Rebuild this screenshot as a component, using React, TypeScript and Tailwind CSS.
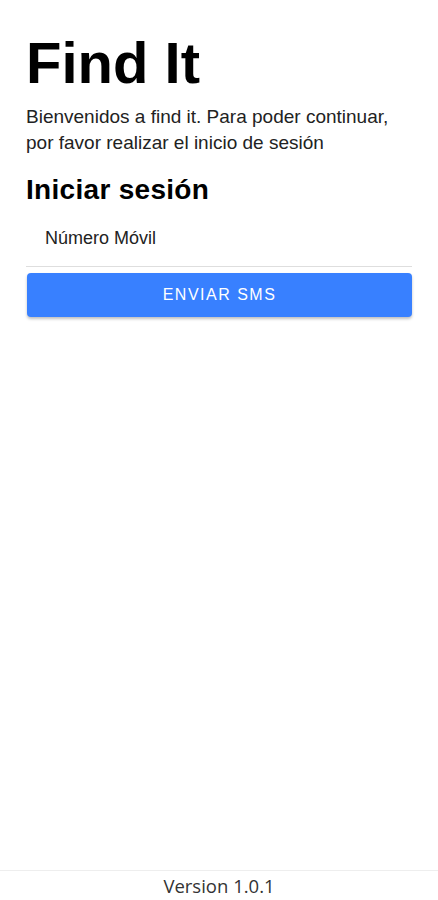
import React from 'react';

const App: React.FC = () => {
  return (
    <div className="min-h-screen flex flex-col bg-white text-black" style={{ fontFamily: '"Liberation Sans", Arial, sans-serif' }}>
      {/* Content */}
      <div className="flex-1 px-[26px] pt-[30px]">
        <h1 className="text-[58px] leading-[66px] font-bold">Find It</h1>
        <p className="mt-[8px] text-[19px] leading-[26px] text-[#222] pr-[6px]">
          Bienvenidos a find it. Para poder continuar, por favor realizar el inicio de sesión
        </p>
        <h2 className="mt-[18px] text-[28px] leading-[32px] font-semibold tracking-[0.3px]">Iniciar sesión</h2>

        {/* Input */}
        <div className="mt-[4px] border-b border-[#dedede] pl-[19px] h-[57px] flex items-center">
          <span className="text-[18px] text-[#222]">Número Móvil</span>
        </div>

        <button className="mt-[6px] w-[385px] mx-[1px] h-[44px] rounded-[4px] bg-[#3880ff] text-white text-[16px] tracking-[1.5px] shadow-[0_2px_3px_rgba(0,0,0,0.25)] flex items-center justify-center">
          ENVIAR SMS
        </button>
      </div>

      {/* Footer */}
      <div className="border-t border-[#eeeeee] h-[30px] flex items-center justify-center">
        <span className="text-[18.5px] text-[#333]" style={{ fontFamily: '"Open Sans", sans-serif' }}>Version 1.0.1</span>
      </div>
    </div>
  );
};

export default App;
